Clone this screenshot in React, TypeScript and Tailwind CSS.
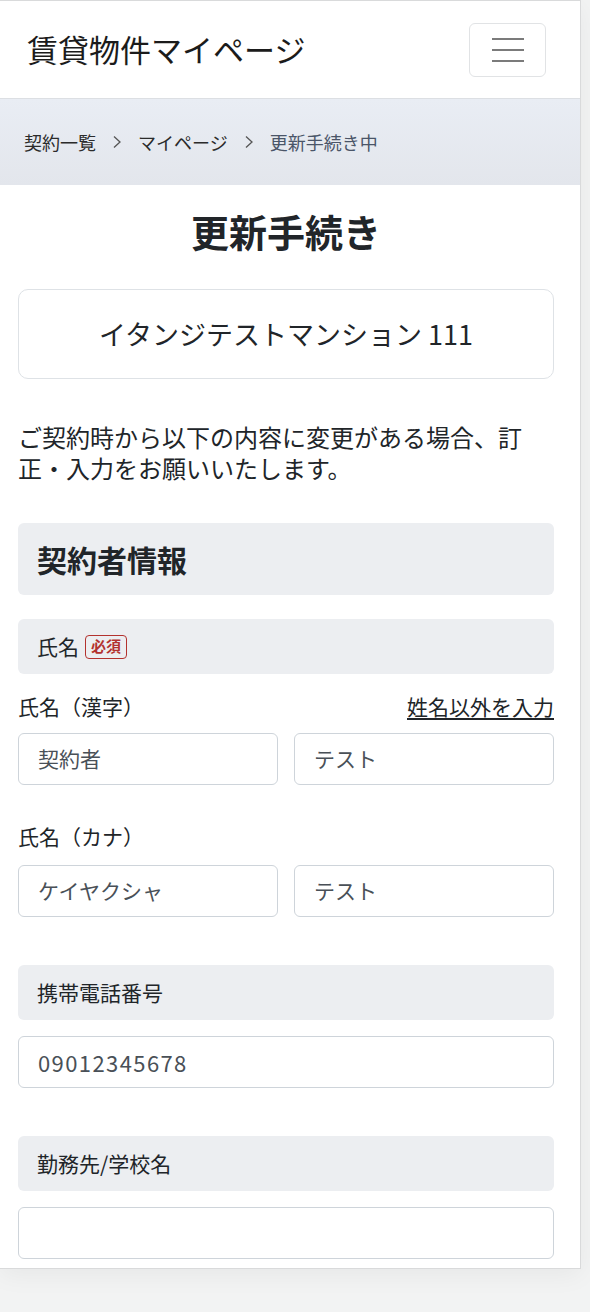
import React from "react";

const font = { fontFamily: '"Noto Sans CJK JP", "Noto Sans", sans-serif' };

const Chevron = () => (
  <svg width="10" height="14" viewBox="0 0 10 14" className="mx-[16px] text-[#555]">
    <polyline points="2,1.5 8,7 2,12.5" fill="none" stroke="currentColor" strokeWidth="1.3" />
  </svg>
);

const GrayLabel = ({ children }: { children: React.ReactNode }) => (
  <div className="flex h-[55px] items-center rounded-[6px] bg-[#eceef1] pl-[19px] text-[21px] text-[#212529]">
    {children}
  </div>
);

const Field = ({ value, className = "" }: { value: string; className?: string }) => (
  <div
    className={
      "flex h-[52px] items-center rounded-[6px] border border-[#ced4da] bg-white pl-[19px] text-[#495057] " +
      className
    }
  >
    {value}
  </div>
);

export default function App() {
  return (
    <div className="min-h-[1312px] bg-[#f2f3f3]" style={font}>
      <div className="w-[581px] border-t border-r border-b border-[#d9dadb] bg-white pb-[9px] shadow-[0_6px_24px_rgba(0,0,0,0.05)]">
        {/* header */}
        <header className="flex h-[98px] items-center justify-between border-b border-[#dcdfe3] pl-[27px] pr-[34px]">
          <div className="text-[31px] text-[#1b1b1b]">賃貸物件マイページ</div>
          <button className="flex h-[54px] w-[77px] flex-col items-center justify-center gap-[9px] rounded-[6px] border border-[#e1e3e5]">
            <span className="block h-[2px] w-[32px] bg-[#7b7b7b]" />
            <span className="block h-[2px] w-[32px] bg-[#7b7b7b]" />
            <span className="block h-[2px] w-[32px] bg-[#7b7b7b]" />
          </button>
        </header>

        {/* breadcrumb */}
        <nav className="flex h-[86px] items-center bg-gradient-to-b from-[#e9edf4] to-[#e3e6ec] pl-[24px] text-[18px]">
          <span className="text-[#2b2b2b]">契約一覧</span>
          <Chevron />
          <span className="text-[#2b2b2b]">マイページ</span>
          <Chevron />
          <span className="text-[#4a5568]">更新手続き中</span>
        </nav>

        <main className="pl-[18px] pr-[26px] text-[#212529]">
          <h1 className="mt-[24px] text-center text-[38px] font-bold leading-[43px]">更新手続き</h1>

          <div className="mt-[37px] flex h-[90px] items-center justify-center rounded-[10px] border border-[#dee2e6] text-[27px]">
            イタンジテストマンション 111
          </div>

          <p className="mt-[42px] text-[24px] leading-[31px]">
            ご契約時から以下の内容に変更がある場合、訂正・入力をお願いいたします。
          </p>

          <div className="mt-[40px] flex h-[72px] items-center rounded-[6px] bg-[#eceef1] pl-[19px] text-[30px] font-bold">
            契約者情報
          </div>

          <div className="mt-[24px]">
            <GrayLabel>
              氏名
              <span className="ml-[6px] flex h-[24px] items-center rounded-[4px] border-[1.5px] border-[#b3322f] px-[5px] text-[15px] font-bold text-[#b3322f]">
                必須
              </span>
            </GrayLabel>
          </div>

          <div className="mt-[18px] flex h-[30px] items-center justify-between text-[21px]">
            <span>氏名（漢字）</span>
            <a className="underline underline-offset-[3px]">姓名以外を入力</a>
          </div>
          <div className="mt-[11px] grid grid-cols-2 gap-[16px]">
            <Field value="契約者" className="text-[21px]" />
            <Field value="テスト" className="text-[21px]" />
          </div>

          <div className="mt-[37px] flex h-[30px] items-center text-[21px]">氏名（カナ）</div>
          <div className="mt-[13px] grid grid-cols-2 gap-[16px]">
            <Field value="ケイヤクシャ" className="text-[21px]" />
            <Field value="テスト" className="text-[21px]" />
          </div>

          <div className="mt-[48px]">
            <GrayLabel>携帯電話番号</GrayLabel>
          </div>
          <div className="mt-[16px]">
            <Field value="09012345678" className="text-[22px] tracking-[1.4px]" />
          </div>

          <div className="mt-[48px]">
            <GrayLabel>勤務先/学校名</GrayLabel>
          </div>
          <div className="mt-[16px]">
            <Field value="" />
          </div>
        </main>
      </div>
    </div>
  );
}
